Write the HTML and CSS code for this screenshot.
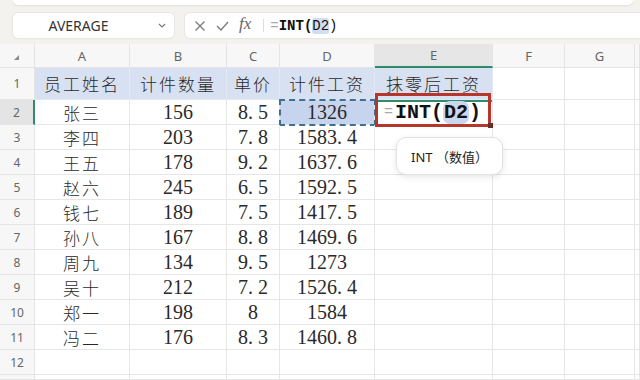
FILE: index.html
```html
<!DOCTYPE html>
<html lang="zh-CN">
<head>
    <meta charset="UTF-8">
    <meta name="viewport" content="width=device-width, initial-scale=1.0">
    <title>抹零后工资 - INT</title>
    <link rel="stylesheet" href="styles.css">
</head>
<body>
    <div class="ribbon"></div>

    <div class="formula-bar">
        <div class="name-box">
            <span class="name">AVERAGE</span>
            <svg class="chevron" width="8" height="5" viewBox="0 0 8 5"><polyline points="1,1 4,4 7,1" fill="none" stroke="#777" stroke-width="1.1"/></svg>
        </div>
        <div class="formula-box">
            <svg class="icon" width="12" height="12" viewBox="0 0 12 12"><path d="M1.5 1.5 L10.5 10.5 M10.5 1.5 L1.5 10.5" stroke="#7a7a7a" stroke-width="1.3" fill="none"/></svg>
            <svg class="icon" width="13" height="12" viewBox="0 0 13 12"><polyline points="1,6 5,10 12,2" stroke="#7a7a7a" stroke-width="1.3" fill="none"/></svg>
            <span class="fx">fx</span>
            <span class="sep"></span>
            <span class="formula"><span class="eq">=</span><b>INT(</b><span class="ref">D2</span>)</span>
        </div>
    </div>

    <div class="sheet" id="sheet"></div>

    <script>
        const letters = ['', 'A', 'B', 'C', 'D', 'E', 'F', 'G', ''];
        const data = [
            ['员工姓名', '计件数量', '单价', '计件工资', '抹零后工资'],
            ['张三', '156', '8.5', '1326', ''],
            ['李四', '203', '7.8', '1583.4', ''],
            ['王五', '178', '9.2', '1637.6', ''],
            ['赵六', '245', '6.5', '1592.5', ''],
            ['钱七', '189', '7.5', '1417.5', ''],
            ['孙八', '167', '8.8', '1469.6', ''],
            ['周九', '134', '9.5', '1273', ''],
            ['吴十', '212', '7.2', '1526.4', ''],
            ['郑一', '198', '8', '1584', ''],
            ['冯二', '176', '8.3', '1460.8', ''],
            [],
            []
        ];
        const sheet = document.getElementById('sheet');

        function addCell(cls, html) {
            const div = document.createElement('div');
            div.className = 'cell ' + cls;
            div.innerHTML = html;
            sheet.appendChild(div);
            return div;
        }

        // column letters
        letters.forEach(function (l, i) {
            if (i === 0) {
                addCell('corner', '<span class="tri"></span>');
            } else {
                addCell('col-head' + (l === 'E' ? ' selected' : ''), l);
            }
        });

        data.forEach(function (row, r) {
            // last row only peeks in at the bottom edge, so no label
            const label = r < data.length - 1 ? r + 1 : '';
            addCell('row-head' + (r === 1 ? ' selected' : ''), label);
            for (let c = 0; c < 8; c++) {
                let v = row[c] || '';
                let cls = r === 0 && c < 5 ? 'title' : '';
                if (c > 0 && r > 0) {
                    cls += ' num';
                    v = v.replace('.', '<span class="dot">.</span>');
                }
                if (c === 0 && r > 0) cls += ' name-cell';
                if (r === 1 && c === 3) cls += ' copied';
                if (r === 1 && c === 4) {
                    cls += ' active';
                    v = '<span class="eq">=</span><b>INT(<span class="ref">D2</span>)</b>' +
                        '<span class="mark"></span><span class="handle"></span>' +
                        '<div class="tip">INT （数值）</div>';
                }
                addCell(cls, v);
            }
        });
    </script>
</body>
</html>
```

FILE: styles.css
```css
body {
    margin: 0;
    width: 640px;
    height: 380px;
    overflow: hidden;
    background-color: #f3f2ef;
    font-family: "Noto Sans", "Noto Sans CJK SC", sans-serif;
    color: #333;
}
.ribbon {
    margin: 0 7px 0 13px;
    height: 5px;
    background-color: #fff;
    border-radius: 0 0 8px 8px;
    box-shadow: 0 1px 2px rgba(0,0,0,0.08);
}
.formula-bar {
    display: flex;
    gap: 11px;
    height: 25px;
    margin: 8px 0 0 13px;
}
.name-box {
    width: 161px;
    box-sizing: border-box;
    display: flex;
    align-items: center;
    padding-right: 8px;
    background-color: #fff;
    border-radius: 5px;
    box-shadow: 0 0 0 1px #e9e7e3, 0 1px 2px rgba(0,0,0,0.05);
}
.name {
    flex-grow: 1;
    text-align: center;
    font-size: 14px;
    color: #333;
    padding-right: 14px;
}
.formula-box {
    flex-grow: 1;
    display: flex;
    align-items: center;
    gap: 10px;
    padding-left: 9px;
    background-color: #fff;
    border-radius: 5px 0 0 5px;
    box-shadow: 0 0 0 1px #e9e7e3, 0 1px 2px rgba(0,0,0,0.05);
}
.fx {
    font-family: "Liberation Serif", serif;
    font-style: italic;
    font-size: 17px;
    color: #666;
    margin-top: -3px;
}
.sep {
    width: 1px;
    height: 13px;
    background-color: #ddd;
    margin-left: 2px;
    margin-right: -4px;
}
.formula {
    font-family: "Liberation Mono", monospace;
    font-size: 14px;
    color: #111;
}
.formula b {
    font-weight: bold;
}
.eq {
    color: #aaa;
    font-weight: normal;
}
.formula .ref {
    background-color: #d3ddef;
    border-radius: 3px;
}

.sheet {
    margin-top: 6px;
    display: grid;
    grid-template-columns: 35px 95px 97px 53px 95px 118px 72px 70px 1fr;
    grid-template-rows: 24px 32px repeat(11, 25px) 5px;
    background-color: #fff;
}
.cell {
    box-sizing: border-box;
    display: flex;
    align-items: center;
    justify-content: center;
    border-right: 1px solid #e6e6e6;
    border-bottom: 1px solid #e6e6e6;
    white-space: nowrap;
    min-width: 0;
}
.corner, .col-head, .row-head {
    background-color: #f7f7f7;
    color: #666;
    border-color: #e4e4e4;
}
.col-head {
    font-size: 13px;
}
.row-head {
    font-size: 12px;
}
.col-head.selected {
    background-color: #e6e6e6;
    border-bottom: 2px solid #2f8c6b;
}
.row-head.selected {
    background-color: #e4e4e4;
    border-right: 2px solid #2f8c6b;
}
.tri {
    width: 0;
    height: 0;
    border-left: 5px solid transparent;
    border-bottom: 5px solid #8a8a8a;
    margin: 4px 0 0 -2px;
}
.title {
    background-color: #d8e1f2;
    border-color: #e2e8f4;
    font-family: "Noto Sans CJK SC", sans-serif;
    font-weight: 300;
    font-size: 17px;
    letter-spacing: 2px;
    color: #2a2a2a;
}
.name-cell {
    font-family: "Noto Sans CJK SC", sans-serif;
    font-weight: 300;
    font-size: 17px;
    letter-spacing: 2px;
    color: #2a2a2a;
}
.num {
    font-family: "Liberation Serif", serif;
    font-size: 20px;
    color: #2a2a2a;
}
.dot {
    padding-right: 5px;
}
.copied {
    background-color: #c6d4ed;
    outline: 2px dashed #3e7090;
    outline-offset: -1px;
}
.active {
    position: relative;
    justify-content: flex-start;
    padding-left: 9px;
    box-shadow: inset 0 2px 0 #2f8c6b;
    font-family: "Liberation Mono", monospace;
    font-size: 20px;
    color: #111;
}
.active .eq {
    font-size: 15px;
    margin-right: 2px;
}
.active .ref {
    background-color: #c9d6ee;
    border-radius: 7px;
    padding: 0 1px;
}
.mark {
    position: absolute;
    left: 0;
    right: 1px;
    top: -7px;
    bottom: -3px;
    border: 3px solid #b7362b;
}
.handle {
    position: absolute;
    right: -1px;
    bottom: -4px;
    width: 5px;
    height: 5px;
    background-color: #6a2d27;
}
.tip {
    position: absolute;
    left: 21px;
    top: 37px;
    width: 107px;
    height: 38px;
    box-sizing: border-box;
    display: flex;
    align-items: center;
    justify-content: center;
    background-color: #fff;
    border: 1px solid #e2e2e2;
    border-radius: 10px;
    box-shadow: 0 2px 6px rgba(0,0,0,0.1);
    font-family: "Noto Sans", "Noto Sans CJK SC", sans-serif;
    font-size: 13px;
    font-weight: normal;
    color: #222;
}
```
